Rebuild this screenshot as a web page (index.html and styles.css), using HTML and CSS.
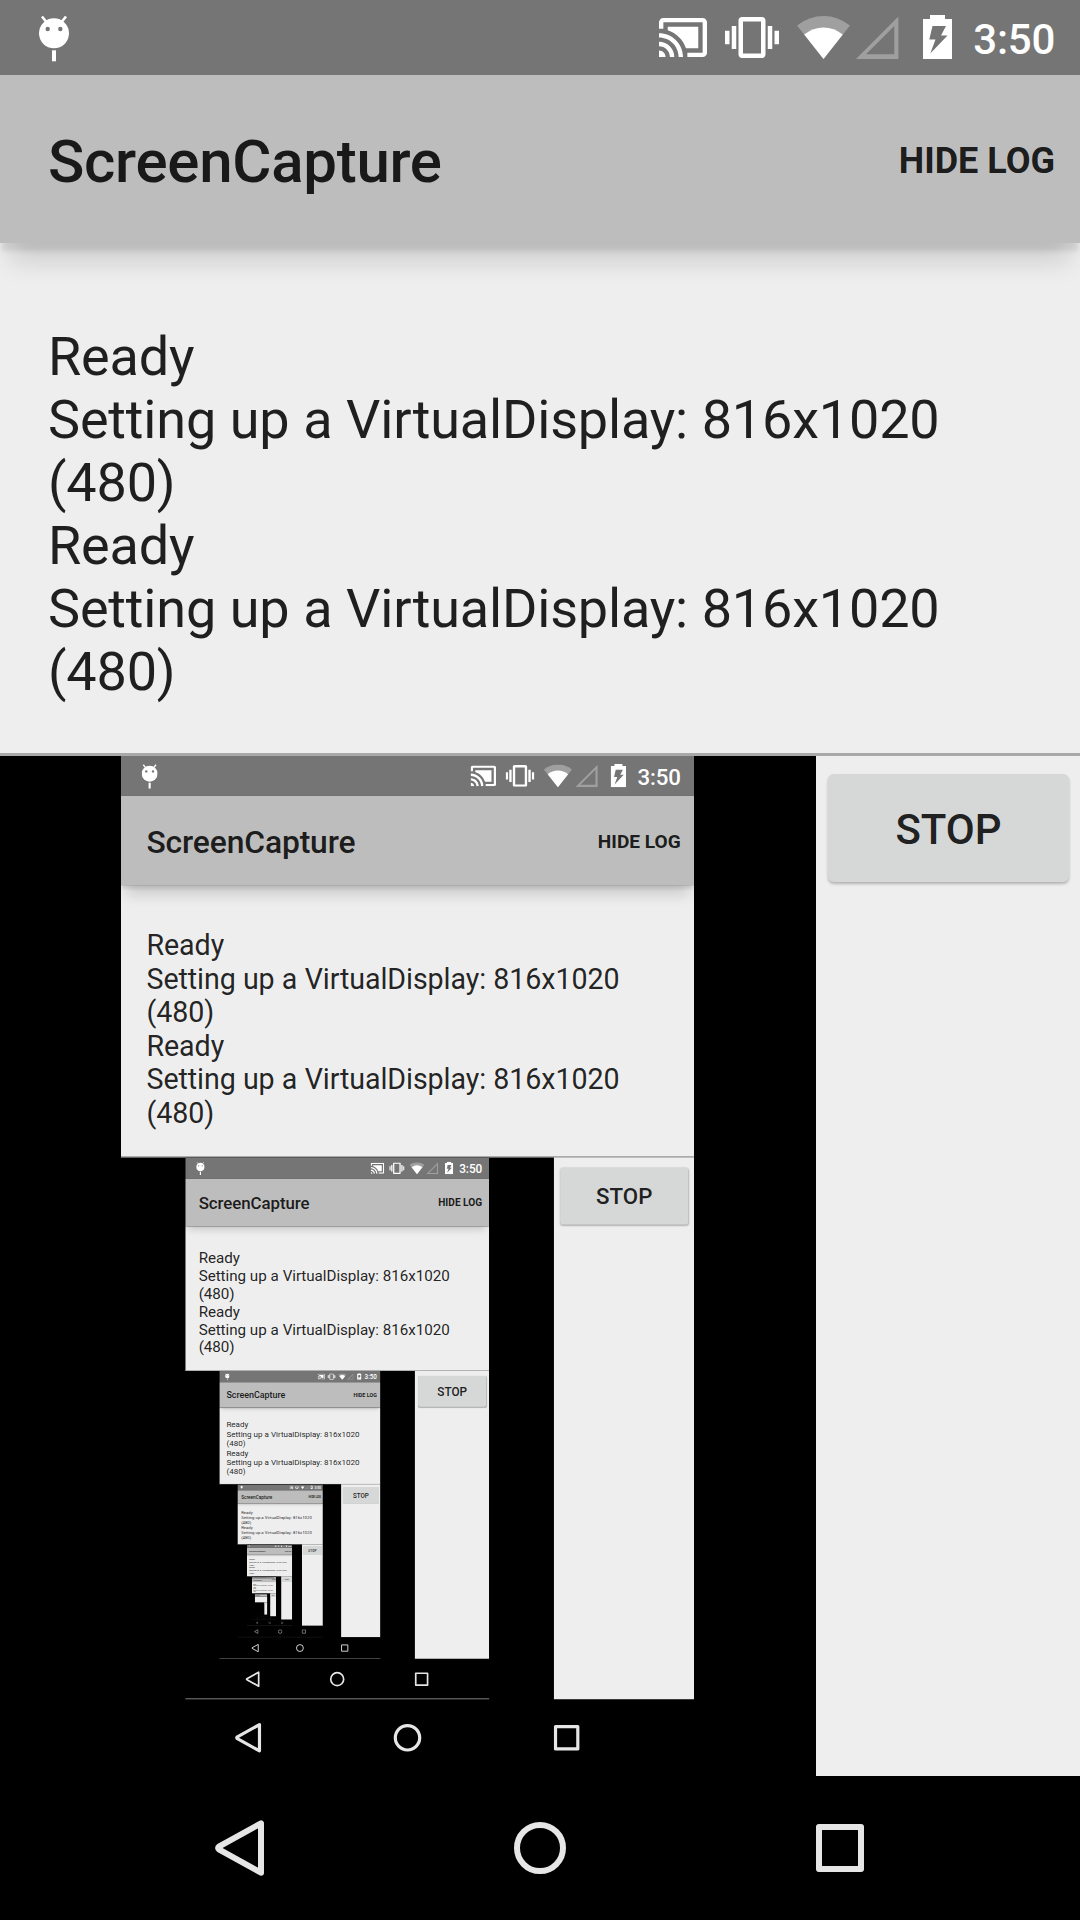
FILE: index.html
```
<!DOCTYPE html>
<html lang="en">
<head>
<meta charset="utf-8">
<title>ScreenCapture</title>
<link rel="stylesheet" href="styles.css">
</head>
<body>
<div class="screen">
  <header class="status-bar">
    <svg class="icon-debug" width="30" height="48" viewBox="0 0 30 48">
      <path d="M3 1.5l4 5M27 1.5l-4 5" stroke="#fff" stroke-width="2.6"/>
      <circle cx="15" cy="18.3" r="15" fill="#fff"/>
      <circle cx="8.7" cy="14" r="2.2" fill="#757575"/>
      <circle cx="21.3" cy="14" r="2.2" fill="#757575"/>
      <path d="M13 35.3h4v11h-4z" fill="#fff"/>
    </svg>
    <div class="status-icons">
      <svg class="icon-cast" width="48" height="39" viewBox="1 3 22 18" preserveAspectRatio="none">
        <path fill="#fff" d="M1 18v3h3c0-1.66-1.34-3-3-3zm0-4v2c2.76 0 5 2.24 5 5h2c0-3.87-3.13-7-7-7zm18-7H5v1.63c3.96 1.28 7.09 4.41 8.37 8.37H19V7zM1 10v2c4.97 0 9 4.03 9 9h2c0-6.08-4.93-11-11-11zm20-7H3c-1.1 0-2 .9-2 2v3h2V5h18v14h-7v2h7c1.1 0 2-.9 2-2V5c0-1.1-.9-2-2-2z"/>
      </svg>
      <svg class="icon-vibrate" width="54" height="41" viewBox="0 3 24 18" preserveAspectRatio="none">
        <path fill="#fff" d="M0 15h2V9H0v6zm3 2h2V7H3v10zm19-8v6h2V9h-2zm-3 8h2V7h-2v10zM16.5 3h-9C6.67 3 6 3.67 6 4.5v15c0 .83.67 1.5 1.5 1.5h9c.83 0 1.5-.67 1.5-1.5v-15c0-.83-.67-1.5-1.5-1.5zM16 19H8V5h8v14z"/>
      </svg>
      <svg class="icon-wifi" width="53" height="43" viewBox="0 0 53 43">
        <path fill="#9f9f9f" d="M26.5 43L0 9.5Q12 0 26.5 0T53 9.5z"/>
        <path fill="#fff" d="M26.5 43L7.2 18.4Q16 11.4 26.5 11.4T45.8 18.4z"/>
      </svg>
      <svg class="icon-signal" width="43" height="43" viewBox="0 0 43 43">
        <path fill="#9f9f9f" fill-rule="evenodd" d="M0 43L42.4.6V43zM10 38.3H38.3V10z"/>
      </svg>
      <svg class="icon-battery" width="29" height="44" viewBox="0 0 29 44">
        <path fill="#fff" d="M7 0h15v4h7v40H0V4h7z"/>
        <path fill="#757575" d="M9.5 11H23L18 20.5h6.5L7.3 38.5 12.5 24.5H6.3z"/>
      </svg>
      <span class="clock">3:50</span>
    </div>
  </header>
  <div class="action-bar">
    <h1 class="title">ScreenCapture</h1>
    <span class="menu-item">HIDE LOG</span>
  </div>
  <main class="content">
    <div class="log">
      <p>Ready</p>
      <p>Setting up a VirtualDisplay: 816x1020 (480)</p>
      <p>Ready</p>
      <p>Setting up a VirtualDisplay: 816x1020 (480)</p>
    </div>
    <div class="capture">
      <div class="surface"><div class="display"></div></div>
      <div class="controls"><div class="button">STOP</div></div>
    </div>
  </main>
  <nav class="nav-bar">
    <svg width="60" height="60" viewBox="0 0 60 60"><path d="M51 5.3V54.7L9.3 31.7Q6.8 30 9.3 28.3z" fill="none" stroke="#e6e6e6" stroke-width="6" stroke-linejoin="round"/></svg>
    <svg width="60" height="60" viewBox="0 0 60 60"><circle cx="30" cy="30" r="23" fill="none" stroke="#e6e6e6" stroke-width="6"/></svg>
    <svg width="60" height="60" viewBox="0 0 60 60"><path d="M9 9H51V51H9z" fill="none" stroke="#e6e6e6" stroke-width="6" stroke-linejoin="round"/></svg>
  </nav>
</div>
<script src="mirror.js"></script>
</body>
</html>
```
FILE: styles.css
```
* {
  box-sizing: border-box;
}

body {
  margin: 0;
  width: 1080px;
  height: 1920px;
  overflow: hidden;
  background: #000;
  font-family: Roboto, "Liberation Sans", sans-serif;
}

.screen {
  display: flex;
  flex-direction: column;
  flex: none;
  width: 1080px;
  height: 1920px;
  overflow: hidden;
  background: #000;
  color: rgba(0, 0, 0, 0.87);
}

svg {
  display: block;
  flex: none;
}

/* Status bar */
.status-bar {
  display: flex;
  flex: none;
  justify-content: space-between;
  height: 75px;
  padding: 15px 25px 0 39px;
  background: #757575;
}

.status-icons {
  display: flex;
  align-items: flex-start;
  height: 45px;
  color: #fff;
}

.icon-cast {
  margin: 3px 18px 0 0;
}

.icon-vibrate {
  margin: 2px 18px 0 0;
}

.icon-wifi {
  margin: 1px 6px 0 0;
}

.icon-signal {
  margin: 1px 24px 0 0;
}

.icon-battery {
  margin-right: 21px;
}

.clock {
  margin-top: 1px;
  font-size: 42px;
  font-weight: 500;
  letter-spacing: -0.25px;
  line-height: 48px;
}

/* Action bar */
.action-bar {
  display: flex;
  flex: none;
  align-items: center;
  justify-content: space-between;
  position: relative;
  z-index: 1;
  height: 168px;
  padding: 0 25px 0 48px;
  background: #bdbdbd;
  box-shadow: 0 10px 5px -2px rgba(0, 0, 0, 0.09), 0 28px 24px -10px rgba(0, 0, 0, 0.14);
}

.title {
  margin: 5px 0 0;
  font-size: 60px;
  font-weight: 500;
  letter-spacing: -0.28px;
  line-height: 70px;
}

.menu-item {
  margin-top: 4px;
  font-size: 36px;
  font-weight: 700;
  line-height: 42px;
}

/* Content */
.content {
  display: flex;
  flex: none;
  flex-direction: column;
  height: 1533px;
}

.log {
  height: 513px;
  padding: 82px 48px 0;
  border-bottom: 3px solid #a9a9a9;
  background: #eee;
  font-size: 54px;
  letter-spacing: -0.18px;
  word-spacing: 0.5px;
  line-height: 63px;
}

.log p {
  margin: 0;
}

.capture {
  display: flex;
  height: 1020px;
}

.surface {
  width: 816px;
  padding-left: 121px;
  background: #000;
}

/* The captured display keeps the 1080:1920 ratio at the height of the surface */
.display {
  position: relative;
  width: 573px;
  height: 1020px;
  overflow: hidden;
}

.display > .screen {
  transform: scale(0.53056, 0.53125);
  transform-origin: 0 0;
}

.display .display::after {
  content: "";
  position: absolute;
  inset: auto 0 0;
  height: 2px;
  background: #9a9a9a;
}

.controls {
  flex: 1;
  padding: 18px 11px 18px 12px;
  background: #eee;
}

.button {
  height: 108px;
  border-radius: 6px;
  background: #d6d7d7;
  box-shadow: 0 2px 3px rgba(0, 0, 0, 0.25);
  font-size: 42px;
  font-weight: 500;
  line-height: 112px;
  text-align: center;
}

/* Navigation bar */
.nav-bar {
  display: flex;
  flex: none;
  align-items: center;
  justify-content: center;
  gap: 240px;
  height: 144px;
  background: #000;
}
```
FILE: mirror.js
```
// The capture surface shows the screen itself, so nest copies of it.
const DEPTH = 7;
const source = document.querySelector('.screen').cloneNode(true);
let surface = document.querySelector('.display');
for (let level = 0; level < DEPTH; level++) {
  const copy = source.cloneNode(true);
  surface.appendChild(copy);
  surface = copy.querySelector('.display');
}
```
